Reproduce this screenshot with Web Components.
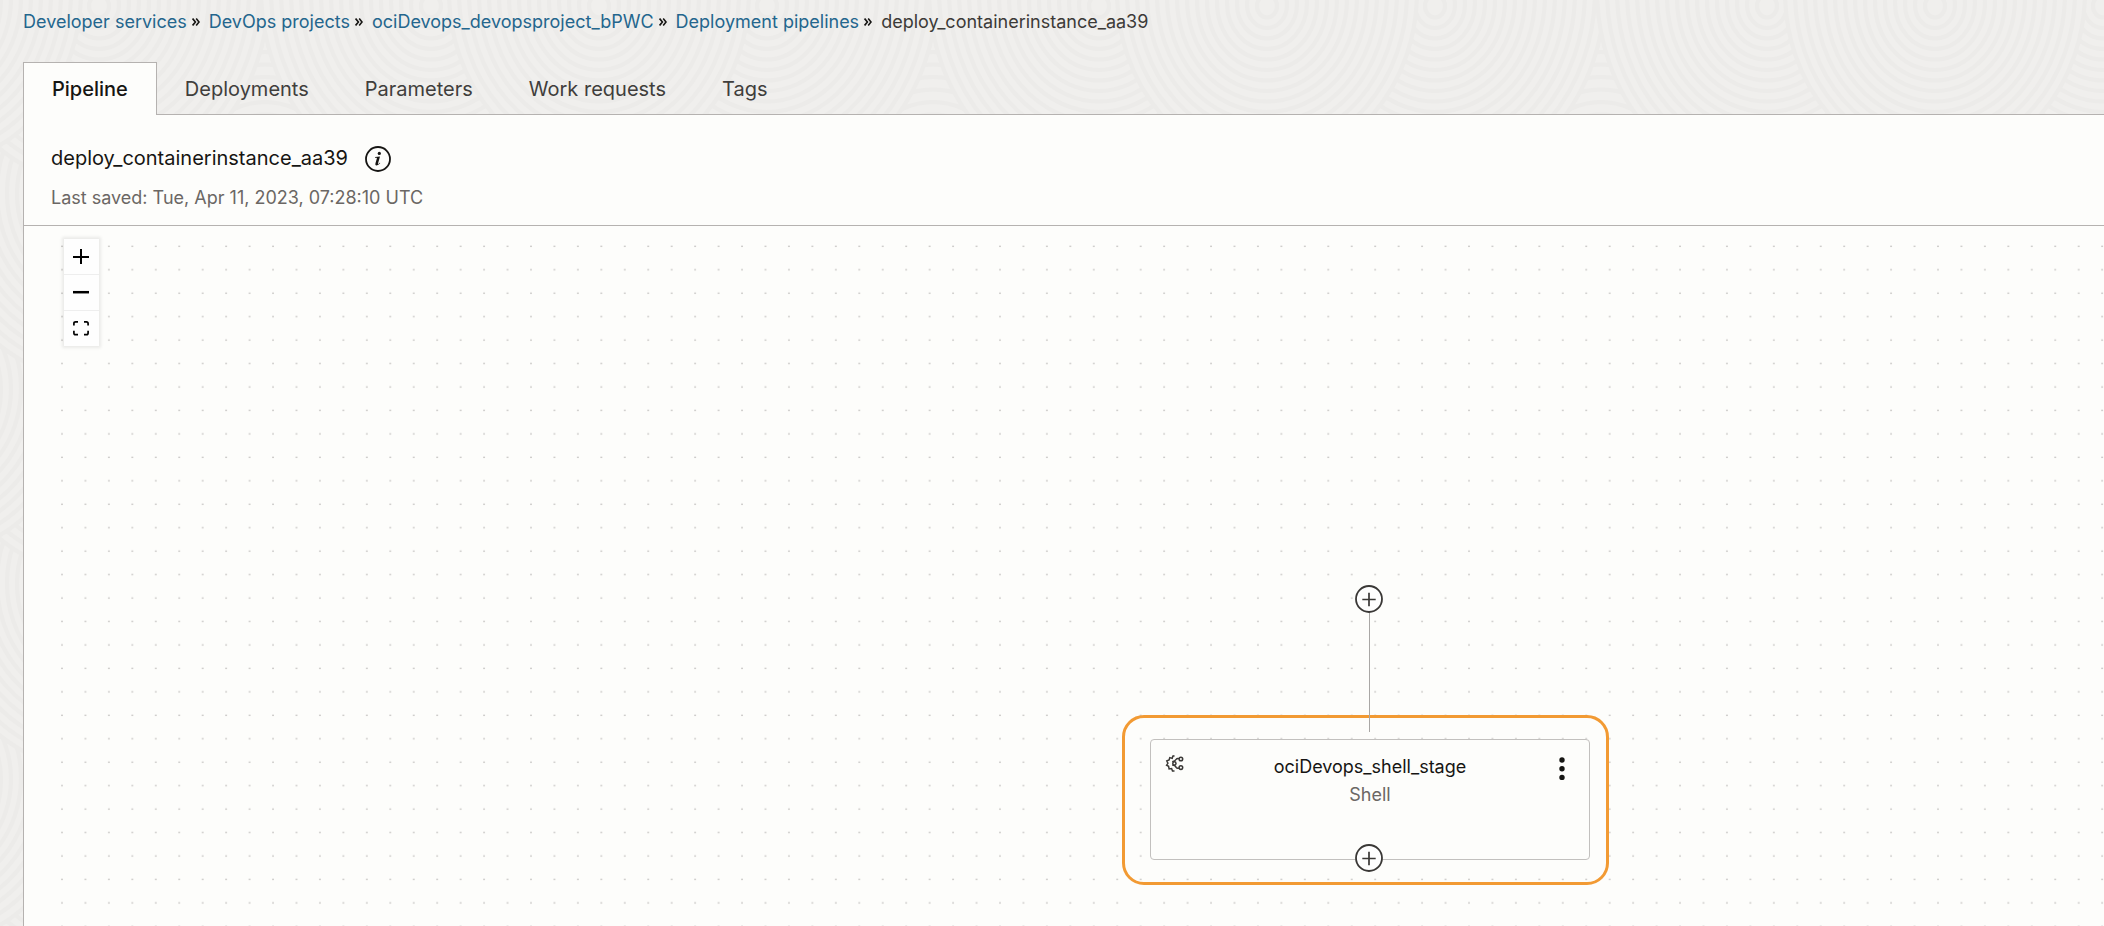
<!DOCTYPE html>
<html lang="en">
<head>
<meta charset="utf-8">
<title>Deployment pipeline</title>
<style>
html, body { height: 100%; }
body { margin: 0; background: #f0efed; font-family: Inter, "Liberation Sans", sans-serif; color: #161513; overflow: hidden; }
</style>
</head>
<body>
<pipeline-page></pipeline-page>
<script>
const define = (name, html) => {
  const template = document.createElement('template');
  template.innerHTML = html;
  customElements.define(name, class extends HTMLElement {
    constructor() {
      super();
      this.attachShadow({ mode: 'open' }).append(template.content.cloneNode(true));
    }
  });
};

/* Tiled contour-line texture behind the page: three ring families per row, rows staggered by half a tile */
const families = [[99, 170], [431, 170], [599, 150]];
const ringsAt = (cx, cy, radius) => {
  let g = '';
  for (let r = radius; r > 0; r -= 10) {
    g += `<ellipse cx="${cx}" cy="${cy - r / 10}" rx="${r}" ry="${r * 1.15}"/>`;
  }
  return g;
};
let rings = '';
for (const [rowY, shift] of [[580, 334], [385, 0], [190, 334], [-5, 0], [-200, 334]]) {
  for (const [cx, radius] of families) {
    for (const ox of [-1336, -668, 0, 668]) rings += ringsAt(cx + shift + ox, rowY + 12, radius);
  }
}
define('contour-background', `
<style>
:host { display: block; position: absolute; inset: 0; z-index: -1; }
svg { display: block; width: 100%; height: 100%; }
</style>
<svg aria-hidden="true"><defs><pattern id="c" width="668" height="390" patternUnits="userSpaceOnUse">
<rect width="668" height="390" fill="#f0efed"/><g fill="#f0efed" stroke="#ecebe9" stroke-width="4">${rings}</g>
</pattern></defs><rect width="100%" height="100%" fill="url(#c)"/></svg>`);

define('bread-crumbs', `
<style>
:host { display: block; }
nav { display: flex; align-items: center; height: 44px; padding-left: 23px; font-size: 18px; line-height: 24px; color: #3c3a38; white-space: nowrap; }
::slotted(a) { color: #24668d; text-decoration: none; }
</style>
<nav aria-label="Breadcrumb"><slot></slot></nav>`);

define('crumb-separator', `
<style>:host { display: block; padding: 0 9px 0 5px; } svg { display: block; }</style>
<svg width="8" height="8" viewBox="0 0 8 8" fill="none" stroke="#161513" stroke-width="1.6" aria-hidden="true"><path d="M.6.6 3.4 4 .6 7.4M4.2.6 7 4 4.2 7.4"/></svg>`);

define('tab-bar', `
<style>
:host { display: block; position: relative; }
div { display: flex; margin-left: 23px; }
</style>
<div role="tablist"><slot></slot></div>`);

define('tab-item', `
<style>
:host { display: block; margin-bottom: -1px; }
button { font: 20px/28px Inter, "Liberation Sans", sans-serif; color: #403e3c; background: none; border: 0; height: 53px; padding: 0 28px; margin: 0; cursor: pointer; }
:host([selected]) button { font-weight: 500; color: #161513; background: #fdfdfb; border: 1px solid #b5b2b0; border-bottom: 0; }
</style>
<button type="button" role="tab"><slot></slot></button>`);

define('pipeline-header', `
<style>
:host { display: block; padding: 28px 27px 14px; border-bottom: 1px solid #b5b2b0; }
.title { display: flex; align-items: center; gap: 17px; }
h1 { margin: 0; padding-bottom: 2px; font-size: 20px; line-height: 30px; font-weight: 400; }
button { padding: 0; border: 0; background: none; display: block; }
svg { display: block; }
p { margin: 10px 0 0; font-size: 18px; line-height: 26px; color: #6b6764; }
</style>
<div class="title"><h1><slot name="name"></slot></h1>
<button type="button" aria-label="Pipeline details"><svg width="26" height="26" viewBox="0 0 26 26"><circle cx="13" cy="13" r="12" fill="none" stroke="#161513" stroke-width="1.8"/><g fill="#161513"><circle cx="14.3" cy="7.4" r="1.6"/><path d="M10.1 11 15 10.4 13 17.6Q12.8 18.5 13.4 18.1L14.8 16.7 15.3 17.1Q13.2 19.7 11.4 19.5 9.9 19.2 10.4 17.4L11.9 12.3Q12 11.7 11.5 11.7L10 11.7Z"/></g></svg></button></div>
<p><slot name="saved"></slot></p>`);

define('zoom-controls', `
<style>
:host { display: grid; width: 35px; gap: 1px; background: #eee; box-shadow: 0 0 3px 2px rgba(0,0,0,.08); }
button { display: block; width: 35px; height: 35px; padding: 9px 10px 10px 9px; border: 0; background: #fefefe; }
svg { display: block; }
</style>
<button type="button" aria-label="Zoom in"><svg width="16" height="16" viewBox="0 0 16 16"><path d="M0 9H16M8 1V16" stroke="#000" stroke-width="2"/></svg></button>
<button type="button" aria-label="Zoom out"><svg width="16" height="16" viewBox="0 0 16 16"><path d="M0 8.2H16" stroke="#000" stroke-width="2.5"/></svg></button>
<button type="button" aria-label="Fit view"><svg width="16" height="16" viewBox="0 0 16 16" fill="none" stroke="#000" stroke-width="1.7"><path d="M.9 5.5V3.5Q.9 1.8 2.6 1.8H5M11 1.8H13.4Q15.1 1.8 15.1 3.5V5.5M15.1 10.8V13Q15.1 14.7 13.4 14.7H11M5 14.7H2.6Q.9 14.7 .9 13V10.8"/></svg></button>`);

define('add-button', `
<style>
:host { display: block; width: 28px; height: 28px; }
button { display: block; padding: 0; border: 0; background: none; }
svg { display: block; }
</style>
<button type="button" aria-label="Add stage"><svg width="28" height="28" viewBox="0 0 28 28"><circle cx="14" cy="14" r="13" fill="#fefefe" stroke="#3a3836" stroke-width="1.8"/><path d="M7.3 14.5H20.7M14 7.8V21.2" stroke="#3a3836" stroke-width="1.7"/></svg></button>`);

define('stage-card', `
<style>
:host { display: block; box-sizing: border-box; width: 487px; height: 170px; padding: 21px 16px 24px 25px; border: 3px solid #f29a33; border-radius: 22px; }
article { box-sizing: border-box; display: grid; grid-template-columns: 20px 1fr 20px; height: 121px; padding: 13px 14px 0 14px; border: 1px solid #c2c0be; border-radius: 4px; background: #fdfdfb; }
h2, p { margin: 0; font-size: 18px; line-height: 28px; font-weight: 400; text-align: center; }
p { color: #6b6764; }
svg { display: block; }
button { padding: 4px 0 0 4px; border: 0; background: none; display: block; height: 28px; }
</style>
<article>
<svg width="20" height="22" viewBox="0 -1 20 22" fill="none" stroke="#3a3836" stroke-width="1.5"><path d="M9.5 1.7 7.8 2.2 7.2 4.4 4.8 3.6 4.1 6 1.8 6.9 2.9 9.3 1.6 11.2 3.6 12.3 4.1 14.9 6.6 14.6 7.5 16.9 9.5 16.9"/><circle cx="15.9" cy="5" r="1.8"/><circle cx="15.9" cy="13.6" r="1.8"/><circle cx="9.4" cy="9.4" r="1.6"/><path d="M7.2 7.7Q10.4 7.2 11.2 5.3 12 4 14 4.6M7.2 11.1Q10.4 11.4 11.2 13.4 12 14.7 14 14"/></svg>
<div><h2><slot name="name"></slot></h2><p><slot name="type"></slot></p></div>
<button type="button" aria-label="Stage actions"><svg width="6" height="24" viewBox="0 0 6 24" fill="#161513"><circle cx="3" cy="3" r="2.7"/><circle cx="3" cy="11.8" r="2.7"/><circle cx="3" cy="20.4" r="2.7"/></svg></button>
</article>`);

define('pipeline-canvas', `
<style>
:host { display: block; position: relative; flex: 1; overflow: hidden; }
.dots { position: absolute; left: 37px; right: 0; top: 19px; height: calc(100% - 19px); width: calc(100% - 37px); }
zoom-controls { position: absolute; left: 40px; top: 13px; }
/* Free canvas: nodes sit at their graph coordinates */
.edge { position: absolute; left: 1345px; top: 386px; width: 1px; height: 120px; background: #a9a7a5; }
.start { position: absolute; left: 1331px; top: 359px; }
.end { position: absolute; left: 1331px; top: 618px; }
stage-card { position: absolute; left: 1098px; top: 489px; }
</style>
<svg class="dots" aria-hidden="true"><defs><pattern id="d" width="23.45" height="23.45" patternUnits="userSpaceOnUse"><circle cx="1" cy="1.3" r=".8" fill="#b5b3b1"/></pattern></defs><rect width="100%" height="100%" fill="url(#d)"/></svg>
<zoom-controls></zoom-controls>
<stage-card><span slot="name">ociDevops_shell_stage</span><span slot="type">Shell</span></stage-card>
<div class="edge"></div>
<add-button class="start"></add-button>
<add-button class="end"></add-button>`);

define('pipeline-page', `
<style>
:host { display: flex; flex-direction: column; height: 100%; position: relative; z-index: 0; }
bread-crumbs { margin-bottom: 18px; }
tab-bar { z-index: 1; }
main { flex: 1; display: flex; flex-direction: column; min-height: 0; margin-left: 23px; background: #fdfdfb; border: solid #b5b2b0; border-width: 1px 0 0 1px; }
</style>
<contour-background></contour-background>
<bread-crumbs>
<a href="#services">Developer services</a><crumb-separator></crumb-separator>
<a href="#projects">DevOps projects</a><crumb-separator></crumb-separator>
<a href="#project">ociDevops_devopsproject_bPWC</a><crumb-separator></crumb-separator>
<a href="#pipelines">Deployment pipelines</a><crumb-separator></crumb-separator>
<span aria-current="page">deploy_containerinstance_aa39</span>
</bread-crumbs>
<tab-bar><tab-item selected>Pipeline</tab-item><tab-item>Deployments</tab-item><tab-item>Parameters</tab-item><tab-item>Work requests</tab-item><tab-item>Tags</tab-item></tab-bar>
<main>
<pipeline-header><span slot="name">deploy_containerinstance_aa39</span><span slot="saved">Last saved: Tue, Apr 11, 2023, 07:28:10 UTC</span></pipeline-header>
<pipeline-canvas></pipeline-canvas>
</main>`);
</script>
</body>
</html>
